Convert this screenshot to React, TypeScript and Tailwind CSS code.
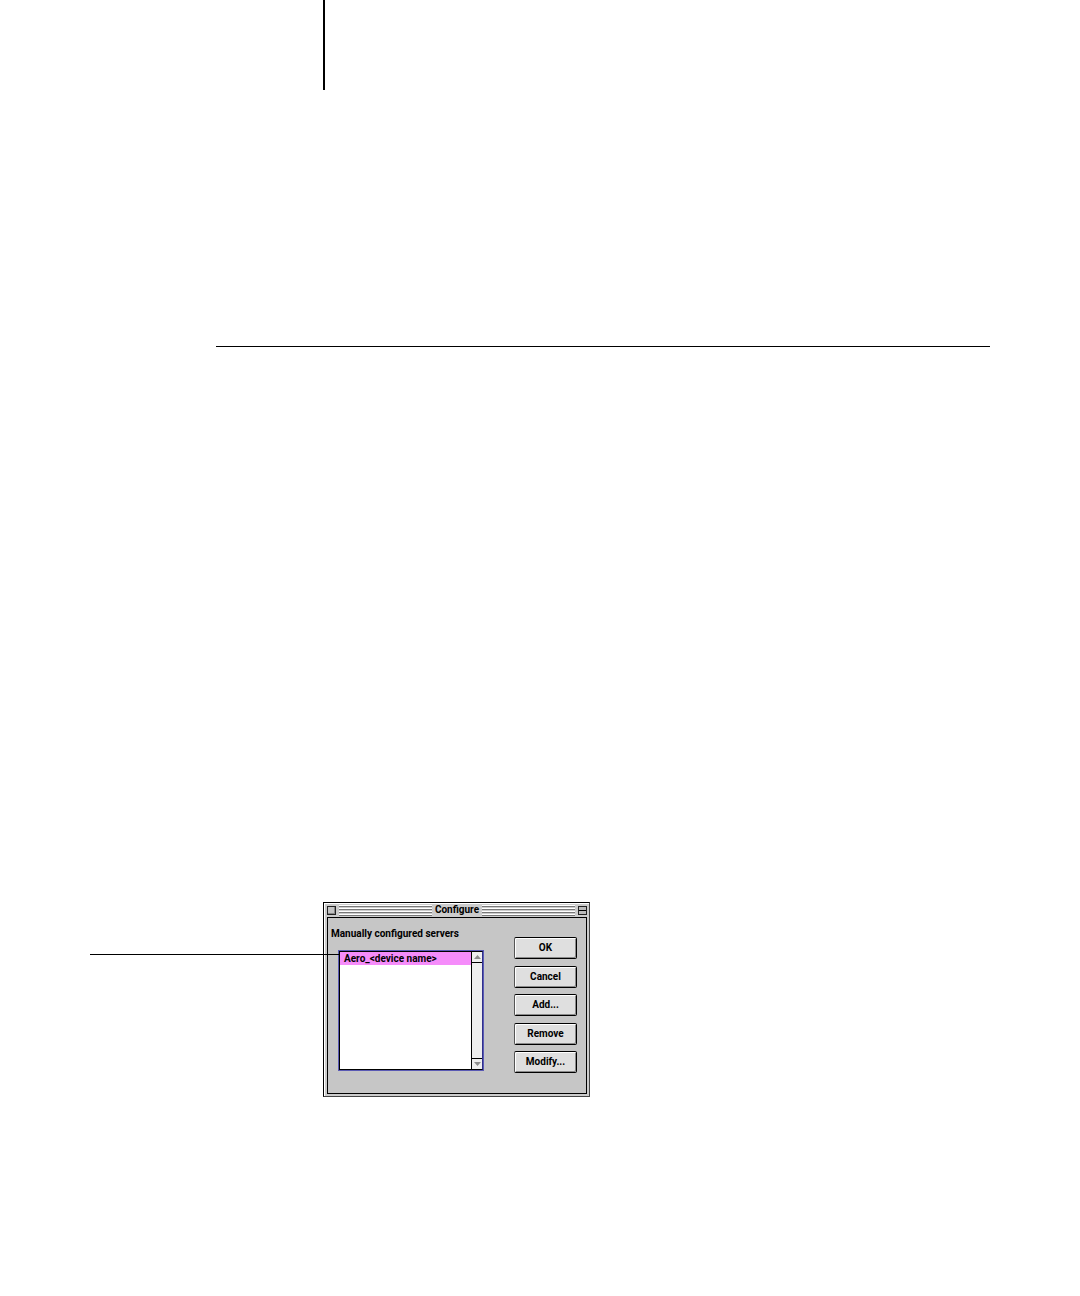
import React from 'react';

interface DialogButtonProps {
  label: string;
}

const ACTIONS = ['OK', 'Cancel', 'Add...', 'Remove', 'Modify...'];

const DialogButton: React.FC<DialogButtonProps> = ({ label }) => (
  <button
    type="button"
    className="h-[22px] w-full rounded-[2px] border border-black border-l-[#555] bg-[#dfdfdf] text-center leading-4 font-bold shadow-[inset_1px_1px_0_#fff,inset_-1px_-1px_0_#8a8a8a]"
  >
    {label}
  </button>
);

const TitleStripes = () => (
  <div className="flex h-[11px] flex-1 flex-col justify-between">
    <div className="h-[2px] border-t border-white border-b border-b-[#777]"></div>
    <div className="h-[2px] border-t border-white border-b border-b-[#777]"></div>
    <div className="h-[2px] border-t border-white border-b border-b-[#777]"></div>
    <div className="h-[2px] border-t border-white border-b border-b-[#777]"></div>
  </div>
);

const Arrow = ({ down }: { down?: boolean }) => (
  <svg viewBox="0 0 7 4" className="h-1 w-[7px]" fill="#8c8c8c">
    <path d={down ? 'M0 0h7L3.5 4z' : 'M0 4h7L3.5 0z'} />
  </svg>
);

const ServerList = () => (
  <div className="flex h-[121px] w-[146px] border border-[#5a5ab4]">
    <div className="flex flex-1 border border-black border-r-[#30308c] bg-white">
      <ul className="min-w-0 flex-1">
        <li className="h-[13px] bg-[#f58cfa] pl-1 leading-[13px] whitespace-nowrap">Aero_&lt;device name&gt;</li>
      </ul>
      <div className="flex w-[11px] flex-col justify-between border-l border-black bg-[#eee]">
        <button type="button" aria-label="Scroll up" className="flex h-[11px] items-center justify-center border-b border-black">
          <Arrow />
        </button>
        <button type="button" aria-label="Scroll down" className="flex h-[11px] items-center justify-center border-t border-black">
          <Arrow down />
        </button>
      </div>
    </div>
  </div>
);

const ConfigureDialog = () => (
  <section className="flex h-[195px] w-[267px] flex-col border border-black border-r-[#444] border-b-[#444] bg-[#ccc] pr-[2px] pb-[2px] pl-[3px] text-[10px] font-bold shadow-[inset_1px_1px_0_#fff]">
    {/* Title bar */}
    <header className="flex h-[14px] items-center gap-[3px]">
      <button type="button" aria-label="Close" className="h-[9px] w-[9px] border border-[#222] bg-[#c4c4c4] shadow-[inset_-1px_-1px_0_#888]"></button>
      <TitleStripes />
      <h1 className="leading-[14px]">Configure</h1>
      <TitleStripes />
      <button type="button" aria-label="Collapse" className="flex h-[9px] w-[9px] items-center border border-[#222] bg-[#bbb]">
        <span className="h-px w-full bg-black"></span>
      </button>
    </header>

    {/* Content */}
    <div className="flex flex-1 justify-between border border-black bg-[#c6c6c6] pr-[9px] pl-[3px]">
      <div>
        <h2 className="mt-2 leading-4">Manually configured servers</h2>
        <div className="mt-2 ml-[7px]">
          <ServerList />
        </div>
      </div>
      <div className="mt-[19px] flex h-[136px] w-[63px] flex-col justify-between">
        {ACTIONS.map((label) => (
          <DialogButton key={label} label={label} />
        ))}
      </div>
    </div>
  </section>
);

export default function App() {
  return (
    <main className="min-h-screen bg-white px-[90px] font-[Roboto,sans-serif] text-black">
      <div className="ml-[233px] h-[90px] w-[2px] bg-black"></div>
      <hr className="mt-64 ml-[126px] border-t border-black" />

      <figure className="relative mt-[555px] pl-[233px]">
        <ConfigureDialog />
        {/* Callout line to the selected server */}
        <div className="absolute top-[52px] left-0 h-px w-[250px] bg-black"></div>
      </figure>
    </main>
  );
}
